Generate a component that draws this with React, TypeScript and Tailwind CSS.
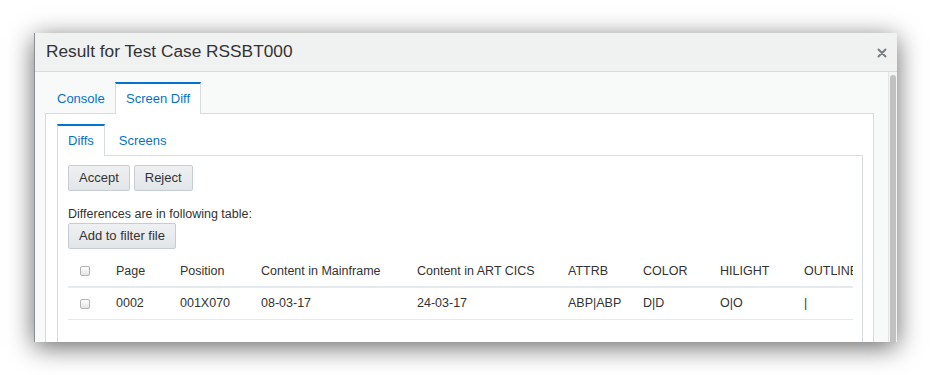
const font = { fontFamily: '"Liberation Sans", Arial, sans-serif' };

const Checkbox = () => (
  <span className="block w-[10px] h-[10px] rounded-[2px] border border-[#b3b3b3] bg-gradient-to-b from-white to-[#e4e4e4]" />
);

const Button = ({ label }: { label: string }) => (
  <button className="h-[26px] px-[10px] rounded-[2px] border border-[#c5ccd3] bg-gradient-to-b from-[#eef0f2] to-[#e3e6e9] text-[13px] text-[#333]">
    {label}
  </button>
);

const columns = [
  { label: "Page", w: "w-[64px]" },
  { label: "Position", w: "w-[81px]" },
  { label: "Content in Mainframe", w: "w-[156px]" },
  { label: "Content in ART CICS", w: "w-[151px]" },
  { label: "ATTRB", w: "w-[75px]" },
  { label: "COLOR", w: "w-[77px]" },
  { label: "HILIGHT", w: "w-[84px]" },
  { label: "OUTLINE", w: "w-[90px]" },
];

const row = ["0002", "001X070", "08-03-17", "24-03-17", "ABP|ABP", "D|D", "O|O", "|"];

export default function App() {
  return (
    <div className="w-[930px] h-[375px] bg-white overflow-hidden pt-[33px] pl-[34px]" style={font}>
      <div className="w-[863px] h-[309px] flex flex-col bg-[#f8f9f9] border-l border-[#8a8f94] shadow-[0_5px_24px_rgba(0,0,0,0.6)] overflow-hidden">
        {/* header */}
        <div className="h-[39px] shrink-0 flex items-center justify-between pl-[11px] pr-[10px] bg-[#f0f1f1] border-b border-[#d6dde2]">
          <span className="text-[17.3px] text-[#333]">Result for Test Case RSSBT000</span>
          <svg width="10" height="10" viewBox="0 0 10 10" className="mt-[2px]">
            <path d="M1.5 1.5 L8.5 8.5 M8.5 1.5 L1.5 8.5" stroke="#7a7f84" strokeWidth="2" strokeLinecap="round" />
          </svg>
        </div>

        <div className="flex flex-1 min-h-0">
          <div className="flex-1 min-w-0 pl-[10px] pt-[10px] pr-[14px]">
            {/* outer tabs */}
            <div className="flex h-[31px] text-[13px] text-[#0572ce]">
              <div className="px-[12px] flex items-center w-[70px] pt-[2px]">Console</div>
              <div className="px-[10px] flex items-center bg-white border-t-2 border-t-[#0572ce] border-x border-x-[#d6dde2] relative z-10 h-[32px]">
                Screen Diff
              </div>
            </div>

            <div className="bg-white border border-[#d6dde2] h-[300px] pl-[11px] pr-[10px] pt-[10px]">
              {/* inner tabs */}
              <div className="flex h-[31px] text-[13px] text-[#0572ce]">
                <div className="px-[10px] flex items-center bg-white border-t-2 border-t-[#0572ce] border-x border-x-[#d6dde2] relative z-10 h-[32px]">
                  Diffs
                </div>
                <div className="px-[14px] flex items-center pt-[2px]">Screens</div>
              </div>

              <div className="border border-[#d6dde2] h-[260px] pl-[10px] pr-[9px] pt-[9px] overflow-hidden">
                <div className="flex gap-[4px]">
                  <Button label="Accept" />
                  <Button label="Reject" />
                </div>
                <div className="mt-[15px] text-[12.5px] text-[#333] leading-[16px]">Differences are in following table:</div>
                <div className="mt-[1px]">
                  <Button label="Add to filter file" />
                </div>

                <div className="mt-[7px] overflow-hidden text-[12.5px] text-[#333]">
                  <div className="flex h-[32px] items-center border-b-2 border-[#e4e9ed] w-[900px]">
                    <div className="w-[36px] pl-[12px]">
                      <Checkbox />
                    </div>
                    {columns.map((c) => (
                      <div key={c.label} className={`${c.w} pl-[12px] whitespace-nowrap`}>
                        {c.label}
                      </div>
                    ))}
                  </div>
                  <div className="flex h-[32px] items-center border-b border-[#e4e9ed] w-[900px]">
                    <div className="w-[36px] pl-[12px]">
                      <Checkbox />
                    </div>
                    {row.map((v, i) => (
                      <div key={i} className={`${columns[i].w} pl-[12px] whitespace-nowrap`}>
                        {v}
                      </div>
                    ))}
                  </div>
                </div>
              </div>
            </div>
          </div>

          {/* scrollbar */}
          <div className="w-[9px] shrink-0 bg-[#f4f4f4] border-l border-[#e4e4e4] pt-[3px] flex justify-center">
            <div className="w-[6px] h-full rounded-t-[3px] bg-[#c1c1c1]" />
          </div>
        </div>
      </div>
    </div>
  );
}
